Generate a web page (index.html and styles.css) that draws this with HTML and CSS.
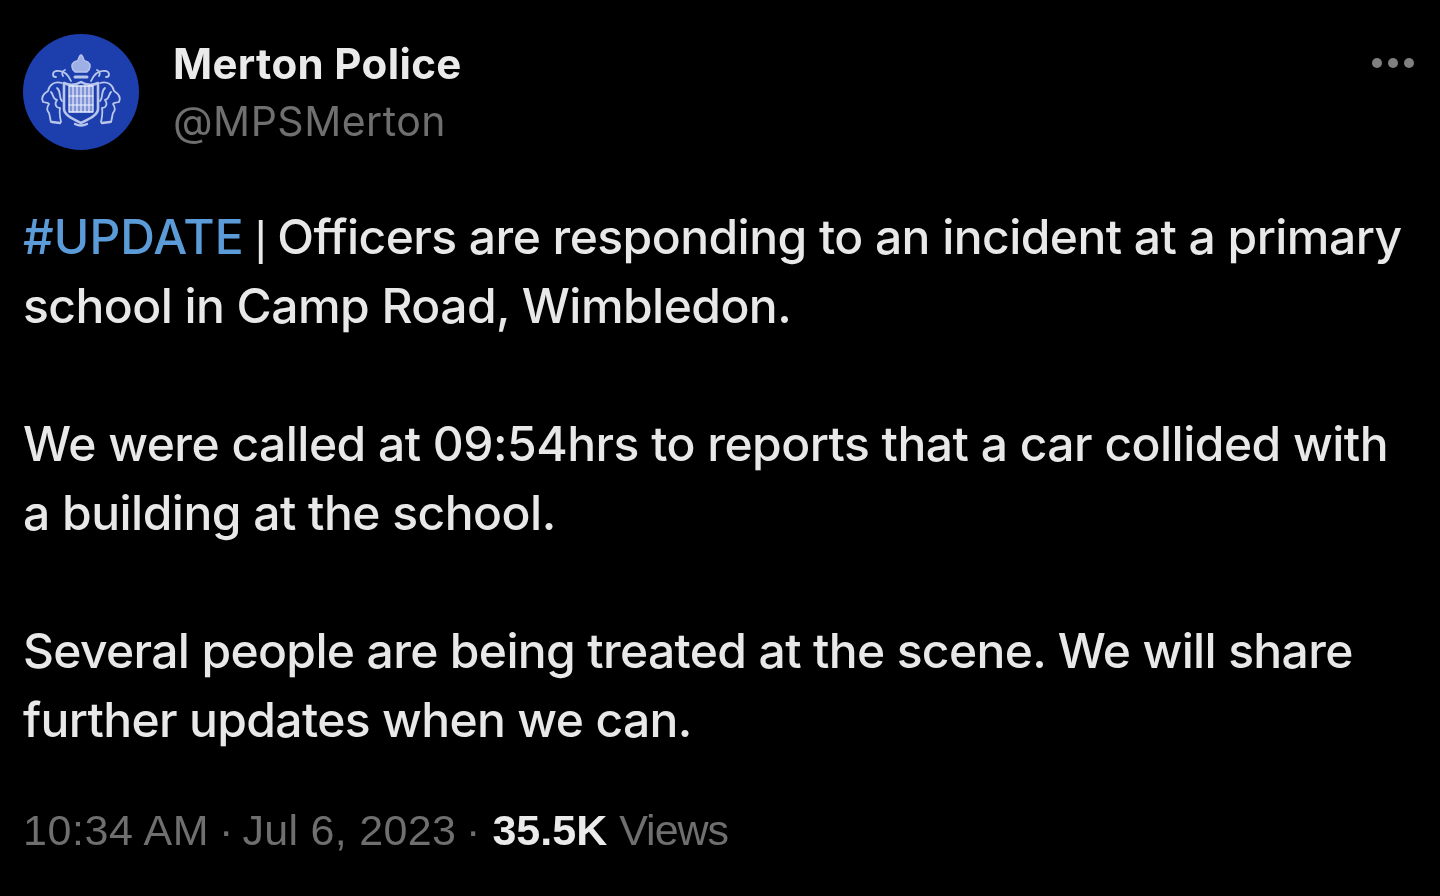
FILE: index.html
```html
<!DOCTYPE html>
<html lang="en">
<head>
<meta charset="utf-8">
<title>Merton Police</title>
<link rel="stylesheet" href="styles.css">
</head>
<body>
<main class="tweet">
  <header class="head">
    <div class="avatar">
      <svg viewBox="0 0 116 116" width="116" height="116" fill="none">
        <circle cx="58" cy="58" r="58" fill="#1d3fae"/>
        <g stroke="#b9c6ec" stroke-width="1.800" stroke-linecap="round" stroke-linejoin="round">
          <path d="M41 49c6 3 12 2 17-1 5 3 11 4 17 1v26c0 6-9 10-17 14-8-4-17-8-17-14z" stroke-width="2.600"/>
          <path d="M46 52h24v26H46z" fill="#7f93d6" stroke="#e2e8fa" stroke-width="1.300"/>
          <path d="M50 52v26M54 52v26M58 52v26M62 52v26M66 52v26M46 62h24M46 71h24" stroke="#eef2fd" stroke-width="1.100"/>
          <path d="M52 38c-4-3-4-8-1-10 2-1 4-1 4-2 1-3 2-5 3-5 1 0 2 2 3 5 0 1 2 1 4 2 3 2 3 7-1 10z" fill="#9fb0e6" stroke-width="1.300"/>
          <path d="M52 43h12" stroke-width="3"/>
          <path d="M48 47c-3-7-8-11-15-10-4 1-4 6 0 6M68 47c3-7 8-11 15-10 4 1 4 6 0 6"/>
          <path d="M42 36c-2 1-4 3-2 6M74 36c2 1 4 3 2 6"/>
          <path d="M39 49c-8-2-13 2-14 8-5 3-7 7-5 11 3 1 5 0 6 2-2 3-3 6 0 9 1 3 1 6 2 9"/>
          <path d="M77 49c8-2 13 2 14 8 5 3 7 7 5 11-3 1-5 0-6 2 2 3 3 6 0 9-1 3-1 6-2 9"/>
          <path d="M28 58c3 3 1 7 6 8-3 4-1 8 3 8-1 5 0 9 1 14M34 54c5 4 1 9 5 13"/>
          <path d="M88 58c-3 3-1 7-6 8 3 4 1 8-3 8 1 5 0 9-1 14M82 54c-5 4-1 9-5 13"/>
          <path d="M29 88l8 1M87 88l-8 1M52 90c4 2 8 2 12 0" stroke-width="2.300"/>
        </g>
      </svg>
    </div>
    <div class="names">
      <div class="name">Merton Police</div>
      <div class="handle">@MPSMerton</div>
    </div>
    <div class="more"><span></span><span></span><span></span></div>
  </header>
  <div class="body">
    <p><span class="tag">#UPDATE</span><span class="pipe">|</span>Officers are responding to an incident at a primary<br>school in Camp Road, Wimbledon.</p>
    <p class="second">We were called at 09:54hrs to reports that a car collided with<br>a building at the school.</p>
    <p class="third">Several people are being treated at the scene. We will share<br>further updates when we can.</p>
  </div>
  <footer class="meta">
    <span class="time">10:34 AM</span>
    <span class="sep first-sep">·</span>
    <span class="date">Jul 6, 2023</span>
    <span class="sep last-sep">·</span>
    <b class="count">35.5K</b>
    <span class="views">Views</span>
  </footer>
</main>
</body>
</html>
```
FILE: styles.css
```css
* { box-sizing: border-box; }
html, body { margin: 0; height: 100%; background: #000; }
body { font-family: "Inter", "Liberation Sans", sans-serif; overflow: hidden; }
.tweet { width: 1440px; height: 896px; padding: 34px 24px 0 23px; display: flex; flex-direction: column; filter: blur(0.7px); }
.head { display: flex; align-items: flex-start; height: 116px; }
.avatar { width: 116px; height: 116px; flex: none; }
.avatar svg { display: block; }
.names { margin-left: 34px; flex: 1; }
.name { color: #eaeaea; font-weight: 700; font-size: 42px; line-height: 58px; letter-spacing: 0.35px; padding-top: 1px; margin-bottom: -1px; }
.handle { color: #6f6f6f; font-size: 41px; line-height: 58px; letter-spacing: 0.5px; }
.more { display: flex; gap: 6px; margin-top: 24px; margin-right: 2px; }
.more span { width: 10px; height: 10px; border-radius: 50%; background: #808080; }
.body { margin-top: 52px; color: #e8e8e8; font-size: 48px; font-weight: 500; line-height: 69px; letter-spacing: -0.55px; }
.body p { margin: 0 0 69px; }
.body .second { letter-spacing: -0.52px; }
.body .third { letter-spacing: -0.65px; }
.tag { color: #5a9bd8; letter-spacing: 0.1px; }
.pipe { margin: 0 11px; font-size: 46px; line-height: 0; font-weight: 400; font-family: "Liberation Sans", sans-serif; }
.meta { display: flex; margin-top: -23px; color: #6f6f6f; font-family: "Liberation Sans", sans-serif; font-size: 43px; line-height: 60px; }
.time { letter-spacing: 0.55px; }
.sep { margin-left: 10px; }
.first-sep { margin-right: 9px; }
.last-sep { margin-right: 12px; }
.date { letter-spacing: 0.3px; }
.count { color: #eaeaea; font-weight: 700; }
.views { margin-left: 12px; letter-spacing: -1px; }
```
